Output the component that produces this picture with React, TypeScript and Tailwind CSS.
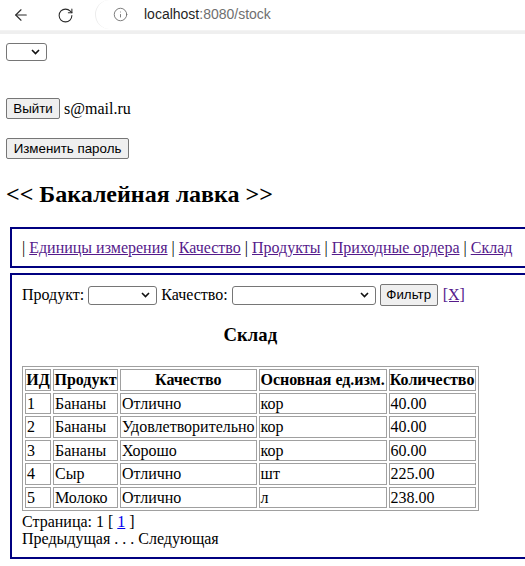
import { ArrowLeft, RotateCw, Info } from "lucide-react";

type Row = { id: number; product: string; quality: string; unit: string; qty: string };

const rows: Row[] = [
  { id: 1, product: "Бананы", quality: "Отлично", unit: "кор", qty: "40.00" },
  { id: 2, product: "Бананы", quality: "Удовлетворительно", unit: "кор", qty: "40.00" },
  { id: 3, product: "Бананы", quality: "Хорошо", unit: "кор", qty: "60.00" },
  { id: 4, product: "Сыр", quality: "Отлично", unit: "шт", qty: "225.00" },
  { id: 5, product: "Молоко", quality: "Отлично", unit: "л", qty: "238.00" },
];

const navLinks = ["Единицы измерения", "Качество", "Продукты", "Приходные ордера", "Склад"];

const headers = [
  { label: "ИД", w: "w-[26px]" },
  { label: "Продукт", w: "w-[65px]" },
  { label: "Качество", w: "w-[135px]" },
  { label: "Основная ед.изм.", w: "w-[128px]" },
  { label: "Количество", w: "w-[87px]" },
];

function Chevron() {
  return (
    <svg width="9" height="6" viewBox="0 0 9 6" className="shrink-0">
      <path d="M1 1l3.5 3.5L8 1" fill="none" stroke="#111" strokeWidth="1.6" />
    </svg>
  );
}

function Select({ className }: { className: string }) {
  return (
    <span
      className={`flex shrink-0 items-center justify-end rounded-[3px] border border-[#767676] bg-white pr-[6px] ${className}`}
    >
      <Chevron />
    </span>
  );
}

function Button({ label, className }: { label: string; className: string }) {
  return (
    <span
      className={`flex shrink-0 items-center justify-center rounded-[2px] border border-[#767676] bg-[#efefef] text-[13.33px] leading-none text-black [font-family:'Liberation_Sans',Arial,sans-serif] ${className}`}
    >
      {label}
    </span>
  );
}

function Toolbar() {
  return (
    <div className="flex h-[30px] items-center bg-white">
      <div className="flex w-[42px] justify-center">
        <ArrowLeft className="h-[18px] w-[18px] text-[#2b2b2b]" strokeWidth={1.5} />
      </div>
      <div className="flex w-[46px] justify-center">
        <RotateCw className="h-[17px] w-[17px] text-[#2b2b2b]" strokeWidth={1.5} />
      </div>
      <div className="ml-[7px] flex h-[29px] flex-1 items-center self-start rounded-l-full border-l border-[#ececec] bg-white pl-[17px]">
        <Info className="h-[15px] w-[15px] text-[#6b6b6b]" strokeWidth={1.4} />
        <span className="ml-[16px] text-[14px] text-[#1f1f1f] [font-family:'Liberation_Sans',Arial,sans-serif]">
          localhost<span className="text-[#6f6f6f]">:8080/stock</span>
        </span>
      </div>
    </div>
  );
}

export default function App() {
  return (
    <div className="h-[566px] w-[525px] overflow-hidden bg-white text-black">
      <Toolbar />
      <div className="h-[4px] border-t border-[#f3f3f3] bg-[#efefef]" />

      <div className="pl-[6px] text-[16px] [font-family:'Liberation_Serif','Times_New_Roman',serif]">
        <div className="flex pt-[9px]">
          <Select className="h-[18px] w-[41px]" />
        </div>

        <div className="mt-[37px] flex items-center gap-[4px]">
          <Button label="Выйти" className="h-[21px] w-[54px]" />
          <span className="leading-[18px]">s@mail.ru</span>
        </div>

        <div className="mt-[19px] flex">
          <Button label="Изменить пароль" className="h-[21px] w-[123px]" />
        </div>

        <h2 className="mt-[21px] text-[24px] font-bold leading-[28px]">&lt;&lt; Бакалейная лавка &gt;&gt;</h2>

        {/* меню */}
        <div className="ml-[4px] mt-[19px] w-[620px] border-2 border-[#000080] px-[10px] py-[10px] leading-[17px]">
          {navLinks.map((l) => (
            <span key={l}>
              | <a className="text-[#551a8b] underline">{l}</a>{" "}
            </span>
          ))}
        </div>

        {/* склад */}
        <div className="ml-[4px] mt-[5px] w-[620px] border-2 border-[#000080] px-[10px] pb-[10px] pt-[9px]">
          <div className="flex h-[22px] items-center leading-[18px]">
            <span>Продукт:</span>
            <Select className="ml-[4px] h-[19px] w-[69px]" />
            <span className="ml-[4px]">Качество:</span>
            <Select className="ml-[4px] h-[19px] w-[144px]" />
            <Button label="Фильтр" className="ml-[4px] h-[22px] w-[58px]" />
            <a className="ml-[5px] text-[#551a8b] underline">[X]</a>
          </div>

          <div className="w-fit">
            <h3 className="mt-[18px] text-center text-[18.72px] font-bold leading-[22px]">Склад</h3>
            <table className="mt-[20px] border-separate border-spacing-[2px] border border-[#a0a0a0]">
              <thead>
                <tr>
                  {headers.map((h) => (
                    <th
                      key={h.label}
                      className={`border border-[#a0a0a0] px-0 py-[1px] text-center font-bold leading-[17.5px] ${h.w}`}
                    >
                      {h.label}
                    </th>
                  ))}
                </tr>
              </thead>
              <tbody>
                {rows.map((r) => (
                  <tr key={r.id}>
                    <td className="border border-[#a0a0a0] px-[1px] py-[1px] leading-[17.5px]">{r.id}</td>
                    <td className="border border-[#a0a0a0] px-[1px] py-[1px] leading-[17.5px]">{r.product}</td>
                    <td className="border border-[#a0a0a0] px-[1px] py-[1px] leading-[17.5px]">{r.quality}</td>
                    <td className="border border-[#a0a0a0] px-[1px] py-[1px] leading-[17.5px]">{r.unit}</td>
                    <td className="border border-[#a0a0a0] px-[1px] py-[1px] leading-[17.5px]">{r.qty}</td>
                  </tr>
                ))}
              </tbody>
            </table>
          </div>

          <div className="mt-[2px] leading-[17px]">
            <div>
              Страница: 1 [ <a className="text-[#0000ee] underline">1</a> ]
            </div>
            <div>Предыдущая . . . Следующая</div>
          </div>
        </div>
      </div>
    </div>
  );
}
